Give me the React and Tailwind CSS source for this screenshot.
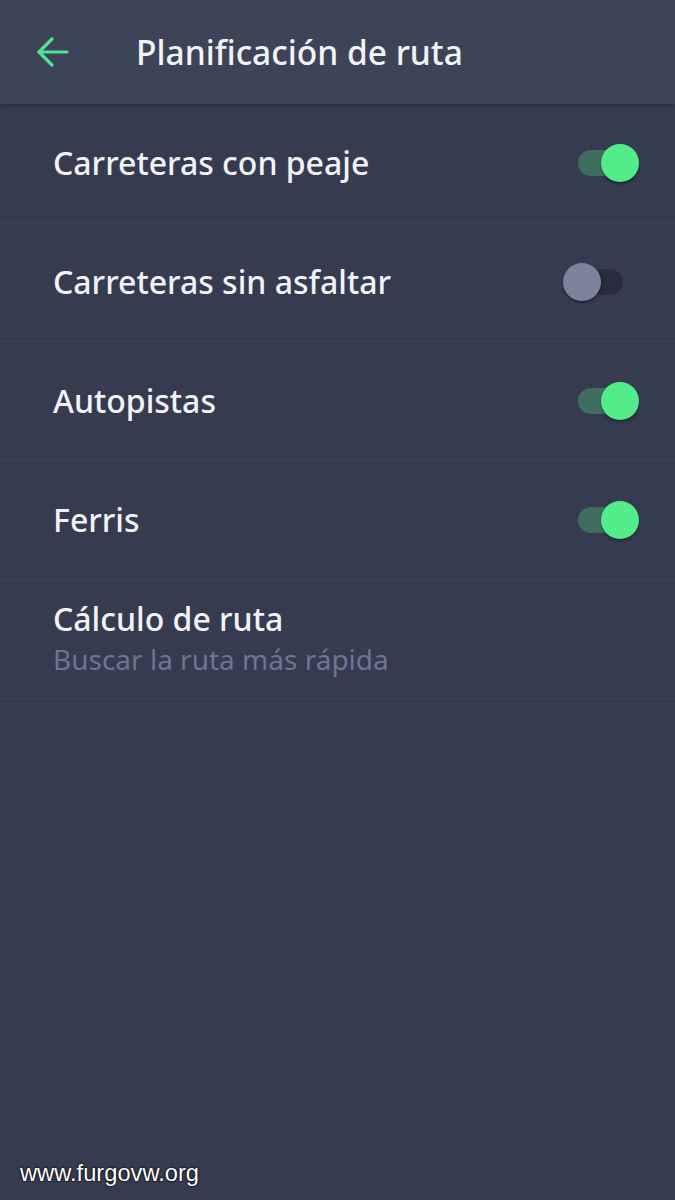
import React, { useState } from 'react'

const rows = [
  { id: 'toll', label: 'Carreteras con peaje', on: true },
  { id: 'unpaved', label: 'Carreteras sin asfaltar', on: false },
  { id: 'highway', label: 'Autopistas', on: true },
  { id: 'ferry', label: 'Ferris', on: true },
]

const Toggle = ({ on, onClick }) => (
  <button onClick={onClick} className='relative w-[62px] h-[40px] flex items-center'>
    <span
      className={`absolute h-[26px] rounded-full ${on ? 'left-[1px] w-[46px] bg-[#3f6e5f]' : 'left-[2px] w-[44px] bg-[#282c3c]'}`}
    />
    <span
      className={`absolute w-[38px] h-[38px] rounded-full shadow-[0_2px_3px_rgba(0,0,0,0.35)] ${on ? 'left-[24px] bg-[#52ec8b]' : 'left-[-14px] bg-[#7c8299]'}`}
    />
  </button>
)

const App = () => {
  const [values, setValues] = useState(() => Object.fromEntries(rows.map((r) => [r.id, r.on])))

  return (
    <div className='relative w-[675px] h-[1200px] bg-[#363b50] text-white overflow-hidden' style={{ fontFamily: '"Noto Sans", "Open Sans", sans-serif' }}>
      <header className='h-[104px] bg-[#3d4458] flex items-center shadow-[0_2px_4px_rgba(0,0,0,0.25)] relative z-10'>
        <button className='w-[136px] pl-[36px] flex items-center h-full' aria-label='Volver'>
          <svg width='34' height='32' viewBox='0 0 34 32' fill='none' stroke='#4fe38d' strokeWidth='3.2' strokeLinecap='round' strokeLinejoin='round'>
            <path d='M31 16H3' />
            <path d='M16 3L3 16l13 13' />
          </svg>
        </button>
        <h1 className='text-[33.5px] font-medium text-[#f2f3f6]'>Planificación de ruta</h1>
      </header>

      <ul>
        {rows.map((row) => (
          <li key={row.id} className='h-[119px] flex items-center justify-between pl-[53px] pr-[36px] border-b border-[#3e435a]'>
            <span className='text-[32px] font-medium text-[#f2f3f6]'>{row.label}</span>
            <Toggle on={values[row.id]} onClick={() => setValues((prev) => ({ ...prev, [row.id]: !prev[row.id] }))} />
          </li>
        ))}
        <li className='h-[119px] flex flex-col justify-center pl-[53px] border-b border-[#3e435a]'>
          <span className='text-[32px] font-medium leading-[40px] text-[#f2f3f6]'>Cálculo de ruta</span>
          <span className='text-[28px] leading-[40px] text-[#6d7590]'>Buscar la ruta más rápida</span>
        </li>
      </ul>

      <div
        className='absolute left-[20px] top-[1156px] text-[23.7px] text-white'
        style={{ fontFamily: '"Liberation Sans", Arial, sans-serif', textShadow: '0 0 2px #000, 0 0 2px #000' }}
      >
        www.furgovw.org
      </div>
    </div>
  )
}

export default App
